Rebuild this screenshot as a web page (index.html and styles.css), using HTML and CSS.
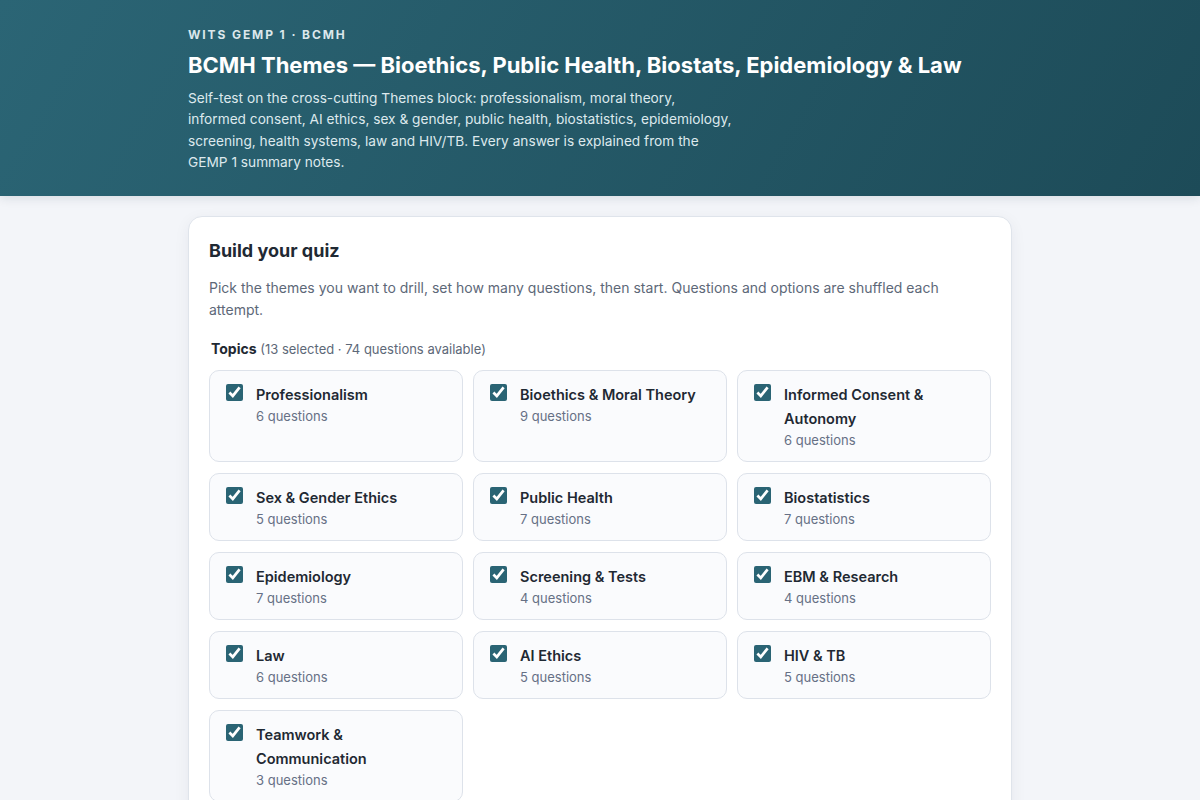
FILE: index.html
```html
<!DOCTYPE html>
<html lang="en">
<head>
    <meta charset="UTF-8">
    <meta name="viewport" content="width=device-width, initial-scale=1.0">
    <title>BCMH Themes Quiz</title>
    <link rel="stylesheet" href="styles.css">
</head>
<body>
    <!-- Header -->
    <header class="hero">
        <div class="container">
            <div class="eyebrow">Wits GEMP 1 · BCMH</div>
            <h1>BCMH Themes — Bioethics, Public Health, Biostats, Epidemiology &amp; Law</h1>
            <p class="hero-text">Self-test on the cross-cutting Themes block: professionalism, moral theory, informed consent, AI ethics, sex &amp; gender, public health, biostatistics, epidemiology, screening, health systems, law and HIV/TB. Every answer is explained from the GEMP 1 summary notes.</p>
        </div>
    </header>

    <main class="container">
        <!-- Quiz builder -->
        <section class="panel">
            <h2>Build your quiz</h2>
            <p class="panel-text">Pick the themes you want to drill, set how many questions, then start. Questions and options are shuffled each attempt.</p>

            <div class="topics-label"><strong>Topics</strong> <span id="topicSummary">(13 selected · 74 questions available)</span></div>

            <div class="topic-grid">
                <label class="topic">
                    <input type="checkbox" checked>
                    <span class="topic-body">
                        <span class="topic-name">Professionalism</span>
                        <span class="topic-count">6 questions</span>
                    </span>
                </label>
                <label class="topic">
                    <input type="checkbox" checked>
                    <span class="topic-body">
                        <span class="topic-name">Bioethics &amp; Moral Theory</span>
                        <span class="topic-count">9 questions</span>
                    </span>
                </label>
                <label class="topic">
                    <input type="checkbox" checked>
                    <span class="topic-body">
                        <span class="topic-name">Informed Consent &amp; Autonomy</span>
                        <span class="topic-count">6 questions</span>
                    </span>
                </label>
                <label class="topic">
                    <input type="checkbox" checked>
                    <span class="topic-body">
                        <span class="topic-name">Sex &amp; Gender Ethics</span>
                        <span class="topic-count">5 questions</span>
                    </span>
                </label>
                <label class="topic">
                    <input type="checkbox" checked>
                    <span class="topic-body">
                        <span class="topic-name">Public Health</span>
                        <span class="topic-count">7 questions</span>
                    </span>
                </label>
                <label class="topic">
                    <input type="checkbox" checked>
                    <span class="topic-body">
                        <span class="topic-name">Biostatistics</span>
                        <span class="topic-count">7 questions</span>
                    </span>
                </label>
                <label class="topic">
                    <input type="checkbox" checked>
                    <span class="topic-body">
                        <span class="topic-name">Epidemiology</span>
                        <span class="topic-count">7 questions</span>
                    </span>
                </label>
                <label class="topic">
                    <input type="checkbox" checked>
                    <span class="topic-body">
                        <span class="topic-name">Screening &amp; Tests</span>
                        <span class="topic-count">4 questions</span>
                    </span>
                </label>
                <label class="topic">
                    <input type="checkbox" checked>
                    <span class="topic-body">
                        <span class="topic-name">EBM &amp; Research</span>
                        <span class="topic-count">4 questions</span>
                    </span>
                </label>
                <label class="topic">
                    <input type="checkbox" checked>
                    <span class="topic-body">
                        <span class="topic-name">Law</span>
                        <span class="topic-count">6 questions</span>
                    </span>
                </label>
                <label class="topic">
                    <input type="checkbox" checked>
                    <span class="topic-body">
                        <span class="topic-name">AI Ethics</span>
                        <span class="topic-count">5 questions</span>
                    </span>
                </label>
                <label class="topic">
                    <input type="checkbox" checked>
                    <span class="topic-body">
                        <span class="topic-name">HIV &amp; TB</span>
                        <span class="topic-count">5 questions</span>
                    </span>
                </label>
                <label class="topic">
                    <input type="checkbox" checked>
                    <span class="topic-body">
                        <span class="topic-name">Teamwork &amp; Communication</span>
                        <span class="topic-count">3 questions</span>
                    </span>
                </label>
            </div>
        </section>
    </main>
</body>
</html>
```

FILE: styles.css
```css
* {
    margin: 0;
    padding: 0;
    box-sizing: border-box;
}

body {
    font-family: Inter, "Noto Sans", sans-serif;
    background-color: #f3f5f9;
    color: #1f2933;
}

.container {
    width: 824px;
    margin: 0 auto;
}

/* Header */
.hero {
    background: linear-gradient(120deg, #2b6575 0%, #1d4b58 100%);
    color: #ffffff;
    padding: 27px 0 22px;
    box-shadow: 0 2px 10px rgba(15, 40, 60, 0.12);
}

.eyebrow {
    font-size: 12px;
    font-weight: 700;
    letter-spacing: 1.9px;
    text-transform: uppercase;
    line-height: 16px;
    color: #dbe7eb;
}

.hero h1 {
    font-size: 22px;
    font-weight: 700;
    line-height: 30px;
    margin-top: 7px;
}

.hero-text {
    max-width: 548px;
    margin-top: 8px;
    font-size: 13.7px;
    line-height: 21.4px;
    color: #dde9ed;
}

/* Quiz builder panel */
.panel {
    margin-top: 20px;
    background-color: #ffffff;
    border: 1px solid #dfe4eb;
    border-radius: 14px;
    padding: 21px 20px 20px;
    box-shadow: 0 4px 16px rgba(20, 40, 70, 0.06);
}

.panel h2 {
    font-size: 18px;
    font-weight: 700;
    line-height: 26px;
    color: #1f2933;
}

.panel-text {
    margin-top: 13px;
    font-size: 14px;
    line-height: 22px;
    color: #5d6878;
}

.topics-label {
    margin-top: 18px;
    padding-left: 2px;
    font-size: 13px;
    line-height: 20px;
    color: #5d6878;
}

.topics-label strong {
    font-size: 14px;
    font-weight: 700;
    color: #1f2933;
}

.topic-grid {
    margin-top: 11px;
    display: grid;
    grid-template-columns: repeat(3, 1fr);
    gap: 11px 10px;
}

.topic {
    display: flex;
    align-items: flex-start;
    gap: 13px;
    padding: 12px 16px;
    background-color: #fafbfd;
    border: 1px solid #dde2ea;
    border-radius: 10px;
    cursor: pointer;
}

.topic input {
    width: 17px;
    height: 17px;
    margin-top: 1px;
    flex-shrink: 0;
    accent-color: #2a6474;
}

.topic-body {
    display: flex;
    flex-direction: column;
}

.topic-name {
    font-size: 14.5px;
    font-weight: 600;
    line-height: 24px;
    color: #1f2933;
}

.topic-count {
    font-size: 13px;
    line-height: 18px;
    color: #667085;
}
```
